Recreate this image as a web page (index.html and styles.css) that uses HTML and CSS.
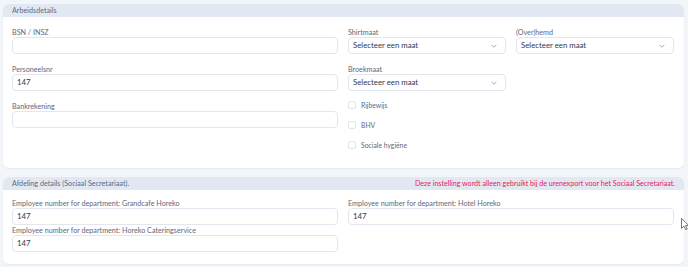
FILE: index.html
```html
<!DOCTYPE html>
<html lang="nl">
<head>
    <meta charset="UTF-8">
    <title>Medewerker - Arbeidsdetails</title>
    <link rel="stylesheet" href="styles.css">
</head>
<body>
    <div class="page">
        <!-- Arbeidsdetails -->
        <section class="card card-work">
            <div class="card-head">
                <span class="card-title">Arbeidsdetails</span>
            </div>
            <div class="card-body">
                <div class="col">
                    <div class="field">
                        <label>BSN / INSZ</label>
                        <div class="input"></div>
                    </div>
                    <div class="field">
                        <label>Personeelsnr</label>
                        <div class="input">147</div>
                    </div>
                    <div class="field">
                        <label>Bankrekening</label>
                        <div class="input"></div>
                    </div>
                </div>
                <div class="col">
                    <div class="pair">
                        <div class="field">
                            <label>Shirtmaat</label>
                            <div class="input select">Selecteer een maat<svg class="chev" viewBox="0 0 10 6"><path d="M1 1l4 4 4-4" /></svg></div>
                        </div>
                        <div class="field">
                            <label>(Over)hemd</label>
                            <div class="input select">Selecteer een maat<svg class="chev" viewBox="0 0 10 6"><path d="M1 1l4 4 4-4" /></svg></div>
                        </div>
                    </div>
                    <div class="pair">
                        <div class="field">
                            <label>Broekmaat</label>
                            <div class="input select">Selecteer een maat<svg class="chev" viewBox="0 0 10 6"><path d="M1 1l4 4 4-4" /></svg></div>
                        </div>
                    </div>
                    <div class="checks">
                        <div class="check"><span class="box"></span>Rijbewijs</div>
                        <div class="check"><span class="box"></span>BHV</div>
                        <div class="check"><span class="box"></span>Sociale hygiëne</div>
                    </div>
                </div>
            </div>
        </section>

        <!-- Afdeling details -->
        <section class="card card-dept">
            <div class="card-head">
                <span class="card-title">Afdeling details (Sociaal Secretariaat).</span>
                <span class="card-note">Deze instelling wordt alleen gebruikt bij de urenexport voor het Sociaal Secretariaat.</span>
            </div>
            <div class="card-body">
                <div class="col tight">
                    <div class="field">
                        <label>Employee number for department: Grandcafe Horeko</label>
                        <div class="input">147</div>
                    </div>
                    <div class="field">
                        <label>Employee number for department: Horeko Cateringservice</label>
                        <div class="input">147</div>
                    </div>
                </div>
                <div class="col tight">
                    <div class="field">
                        <label>Employee number for department: Hotel Horeko</label>
                        <div class="input">147</div>
                    </div>
                </div>
            </div>
        </section>
    </div>

    <!-- mouse pointer -->
    <svg class="cursor" viewBox="0 0 8 12"><path d="M0.5 0.5v10l2.5-2.4 1.7 3.6 1.5-0.7-1.7-3.5h3.3z" /></svg>
</body>
</html>
```

FILE: styles.css
```css
* {
    margin: 0;
    padding: 0;
    box-sizing: border-box;
}
:root {
    --page-bg: #f2f5f9;
    --head-bg: #e2e8f2;
    --card-bg: #FFFFFF;
    --label-color: #5f687a;
    --title-color: #5d6a80;
    --value-color: #33384a;
    --border-color: #e1e6ef;
    --note-color: #e8185a;
    --chev-color: #7e9bd3;
}
body {
    font-family: Lato, 'Liberation Sans', Arial, sans-serif;
    background-color: var(--page-bg);
    color: var(--value-color);
    width: 688px;
    height: 267px;
    overflow: hidden;
    position: relative;
}
.page {
    padding: 4px 4px 0 3px;
    display: flex;
    flex-direction: column;
    gap: 9px;
}
/* Cards */
.card {
    background: var(--card-bg);
    border-radius: 6px;
    overflow: hidden;
    box-shadow: 0 1px 2px rgba(30, 50, 90, 0.06);
}
.card-head {
    background: var(--head-bg);
    height: 13px;
    padding: 0 9px;
    display: flex;
    align-items: center;
    justify-content: space-between;
}
.card-title {
    font-size: 7.2px;
    color: var(--title-color);
}
.card-note {
    font-size: 7.1px;
    color: var(--note-color);
}
.card-body {
    display: grid;
    grid-template-columns: 326px 326px;
    column-gap: 10px;
    padding: 11px 10px 0 9px;
}
.card-work .card-body {
    height: 151px;
}
.card-dept .card-body {
    height: 74px;
    padding-top: 9px;
}
.col {
    display: flex;
    flex-direction: column;
    gap: 11px;
}
.col.tight {
    gap: 1px;
}
.pair {
    display: grid;
    grid-template-columns: 158px 158px;
    column-gap: 10px;
}
/* Fields */
.field label {
    display: block;
    font-size: 7.2px;
    line-height: 9px;
    color: var(--label-color);
}
.input {
    height: 17px;
    border: 1px solid var(--border-color);
    border-radius: 4px;
    padding: 0 8px 0 4px;
    font-size: 7.8px;
    line-height: 15px;
    color: var(--value-color);
    display: flex;
    align-items: center;
}
.select {
    justify-content: space-between;
}
.chev {
    width: 6px;
    height: 4px;
    fill: none;
    stroke: var(--chev-color);
    stroke-width: 1.4;
}
/* Checkboxes */
.checks {
    display: flex;
    flex-direction: column;
    gap: 12px;
    margin-top: -1px;
}
.check {
    display: flex;
    align-items: center;
    height: 8px;
    font-size: 6.8px;
    color: var(--label-color);
}
.check .box {
    width: 8px;
    height: 8px;
    border: 1px solid var(--border-color);
    border-radius: 2px;
    margin-right: 5px;
}
/* Mouse pointer over the page */
.cursor {
    position: absolute;
    left: 681px;
    top: 218px;
    width: 8px;
    height: 12px;
    fill: #fff;
    stroke: #555;
    stroke-width: 0.8;
}
```
